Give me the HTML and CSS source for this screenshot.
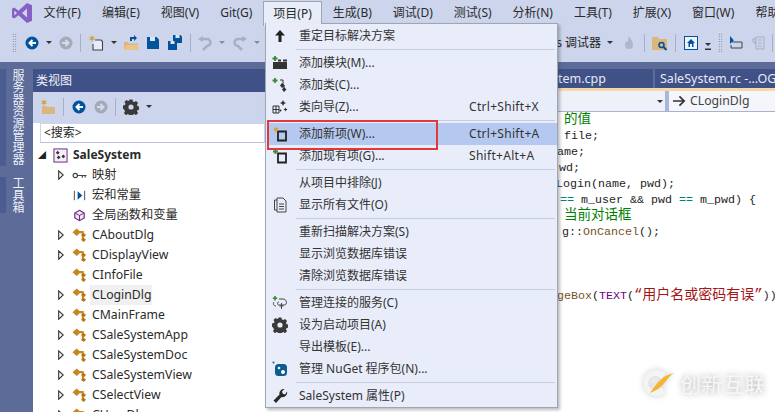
FILE: index.html
```html
<!DOCTYPE html>
<html lang="zh-CN">
<head>
<meta charset="utf-8">
<title>类视图</title>
<link rel="stylesheet" href="styles.css">
</head>
<body>
<svg class="defs" width="0" height="0">
  <symbol id="back" viewBox="0 0 14 14"><circle cx="7" cy="7" r="6.5" fill="#00539c"/><path d="M11 7H5M7.5 4 4.5 7l3 3" fill="none" stroke="#fff" stroke-width="2"/></symbol>
  <symbol id="fwd" viewBox="0 0 14 14"><circle cx="7" cy="7" r="6.5" fill="#a4aab8"/><path d="M3 7h6M6.5 4l3 3-3 3" fill="none" stroke="#d5dbeb" stroke-width="2"/></symbol>
  <symbol id="gear" viewBox="0 0 16 16"><path fill="#3a3a3a" fill-rule="evenodd" d="M6.500 0.500h3l.4 2 1.400.6 1.700-1.100 2.100 2.100-1.100 1.700.6 1.400 1.900.4v3l-1.900.4-.6 1.400 1.100 1.700-2.100 2.100-1.700-1.100-1.400.6-.4 1.900h-3l-.4-1.900-1.400-.6-1.700 1.100-2.100-2.100 1.100-1.700-.6-1.400L0 9.500v-3l1.900-.4.6-1.400L1.400 3 3.500 .9l1.700 1.100 1-.6zM8 5.400a2.600 2.600 0 1 0 0 5.200 2.600 2.600 0 0 0 0-5.200z"/></symbol>
  <symbol id="cls" viewBox="0 0 16 16"><path fill="#c8861f" d="M5 0.500 9.500 4.500 5 8.500 0.500 4.500zM8 3.300h4.500v2.200H8zM10.500 4.500h1.800V13h-1.800z"/><path fill="#b97714" d="M12.300 5l2.700 2.500-2.700 2.500-2.700-2.500zM12.300 10l2.700 2.500-2.700 2.500-2.700-2.500z"/></symbol>
  <symbol id="tri" viewBox="0 0 6 10"><path d="M.7.800 5.200 5 .7 9.200z" fill="#fff" stroke="#333" stroke-width="1.100"/></symbol>
  <symbol id="drop" viewBox="0 0 6 3"><path d="M0 0h6L3 3z" fill="#333"/></symbol>
</svg>

<header class="menubar">
  <svg class="vs-logo" viewBox="0 0 22 22"><path fill="#8661c5" fill-rule="evenodd" d="M16 1l5 2.200v15.600L16 21 7.500 13.200 3.200 16.400 1 15.300V6.700l2.200-1.100 4.300 3.200zM16 6.500 11 11l5 4.500zM3.300 8.500v5L6 11z"/></svg>
  <nav class="menu-items">
    <span class="mi">文件(F)</span><span class="mi">编辑(E)</span><span class="mi">视图(V)</span><span class="mi">Git(G)</span><span class="mi mi-open">项目(P)</span><span class="mi">生成(B)</span><span class="mi">调试(D)</span><span class="mi">测试(S)</span><span class="mi">分析(N)</span><span class="mi">工具(T)</span><span class="mi">扩展(X)</span><span class="mi">窗口(W)</span><span class="mi">帮助</span>
  </nav>
</header>

<div class="toolbar">
  <i class="grip"></i>
  <svg class="tb14 ml-back"><use href="#back"/></svg>
  <svg class="dd"><use href="#drop"/></svg>
  <svg class="tb14"><use href="#fwd"/></svg>
  <i class="tsep"></i>
  <svg class="tb16" viewBox="0 0 16 16"><path d="M7 5h6l1.500 1.500V15H5V9" fill="#e8edf9" stroke="#444" stroke-width="1.100"/><path d="M4 0l.8 2.200L7 1.500 5.500 3.500 7 5 4.800 4.800 4 7 3.200 4.800 1 5l1.500-1.500L1 1.500l2.200.7z" fill="#d9a13c"/></svg>
  <svg class="dd"><use href="#drop"/></svg>
  <svg class="tb16 gap-open" viewBox="0 0 16 16"><path d="M1 7h4l1 1.500h9V15H1z" fill="#dcb67a"/><path d="M1 15l2-5h12l-1 5z" fill="#eac58a"/><path d="M7 6V2h4V0l3 3-3 3V4H9v2z" fill="#00539c"/></svg>
  <svg class="tb14 gap-save" viewBox="0 0 14 14"><path d="M1 1h9.500L13 3.500V13H1z" fill="#00539c"/><rect x="4" y="1" width="5" height="4" fill="#dfe5f5"/></svg>
  <svg class="tb16 gap-all" viewBox="0 0 16 16"><path d="M6 0h7.500L15 1.500V8H6z" fill="#00539c"/><rect x="8.500" y="0" width="4" height="3" fill="#dfe5f5"/><path d="M1 6h9v9H1z" fill="#00539c"/><rect x="3.500" y="6" width="4" height="3" fill="#dfe5f5"/></svg>
  <i class="tsep"></i>
  <svg class="tb16 undo" viewBox="0 0 16 16"><path d="M3 4h7a3.500 3.500 0 0 1 0 7L6 15" fill="none" stroke="#a8afc0" stroke-width="2.500"/><path d="M1 4 6 1v6z" fill="#a8afc0"/></svg>
  <svg class="dd dd-gray"><use href="#drop"/></svg>
  <svg class="tb16 redo" viewBox="0 0 16 16"><path d="M13 4H6a3.500 3.500 0 0 0 0 7l4 4" fill="none" stroke="#a8afc0" stroke-width="2.500"/><path d="M15 4l-5-3v6z" fill="#a8afc0"/></svg>
  <svg class="dd dd-gray"><use href="#drop"/></svg>
  <div class="tb-right">
    <span class="debugger">s 调试器</span>
    <svg class="dd"><use href="#drop"/></svg>
    <svg class="tb16 flame" viewBox="0 0 16 16"><path d="M8 1c1 3 4 4 4 9a4 4 0 0 1-8 0c0-2 1-3 1.500-4 .5 1 1 1 1.500 1 0-2 0-4 1-6z" fill="#b0b7c8"/></svg>
    <i class="tsep"></i>
    <svg class="tb16" viewBox="0 0 16 16"><path d="M0 2h6l1 2h8v11H0z" fill="#dcb67a"/><circle cx="9.500" cy="10" r="2.500" fill="none" stroke="#00539c" stroke-width="1.500"/><path d="M11.500 12l3 3" stroke="#00539c" stroke-width="2"/></svg>
    <i class="tsep"></i>
    <svg class="tb14 home" viewBox="0 0 14 14"><rect x=".5" y=".5" width="13" height="13" fill="#f0f3fb" stroke="#00539c"/><path d="M7 3 3 7h1.500v4H6V8h2v3h1.500V7H11z" fill="#00539c"/></svg>
    <svg class="drop-ln" viewBox="0 0 6 7"><path d="M0 0h6L3 3z M0 5.500h6V7H0z" fill="#333"/></svg>
    <i class="grip grip-r"></i>
    <svg class="tb14 ptr" viewBox="0 0 14 14"><path d="M1 0v8l2-2 1.500 1V4z" fill="#00539c"/><path d="M5 6h8v6H2V9" fill="none" stroke="#444"/></svg>
    <svg class="tb14 gray-list" viewBox="0 0 14 14"><path d="M5 1h8v12H5zM1 4l3-2v6z M7 4h4M7 7h4M7 10h4" fill="none" stroke="#a8afc0"/></svg>
    <i class="tsep tsep-end"></i>
  </div>
</div>

<main class="dock">
  <aside class="rail">
    <div class="vtab vtab-a">服务器资源管理器</div>
    <div class="vtab">工具箱</div>
  </aside>

  <section class="panel">
    <h2 class="panel-title">类视图</h2>
    <div class="panel-tools">
      <svg class="tb16" viewBox="0 0 16 16"><path d="M2 7h4l1 1h8v7H2z" fill="#dcb67a"/><path d="M4 0l.8 2.200L7 1.500 5.500 3.500 7 5 4.800 4.800 4 7 3.200 4.800 1 5l1.500-1.500L1 1.500l2.200.7z" fill="#d9a13c"/></svg>
      <i class="tsep"></i>
      <svg class="tb14 ml4"><use href="#back"/></svg>
      <svg class="tb14 ml6"><use href="#fwd"/></svg>
      <i class="tsep"></i>
      <svg class="tb16"><use href="#gear"/></svg>
      <svg class="dd"><use href="#drop"/></svg>
    </div>
    <div class="search">&lt;搜索&gt;</div>
    <ul class="tree">
      <li class="row root"><span class="exp">◢</span>
        <svg class="ico" viewBox="0 0 16 16"><rect x="1" y="1" width="14" height="14" fill="#f3eef8" stroke="#68217a"/><path d="M5 3l2 2-2 2-2-2zM11 7l2 2-2 2-2-2zM6 8l2 2-2 2-2-2z" fill="#333"/></svg>
        <b>SaleSystem</b></li>
      <li class="row"><svg class="tri"><use href="#tri"/></svg>
        <svg class="ico" viewBox="0 0 16 16"><circle cx="3.500" cy="8" r="2.300" fill="none" stroke="#444" stroke-width="1.300"/><path d="M6 8h9.500M11 8v2.500M14 8v2" stroke="#444" stroke-width="1.300" fill="none"/></svg>
        <span>映射</span></li>
      <li class="row"><i class="tri-gap"></i>
        <svg class="ico" viewBox="0 0 16 16"><path d="M2.500 3v10" stroke="#444"/><path d="M6 3.500v9l5-4.500z" fill="#00539c"/><path d="M13.500 3v10" stroke="#444"/></svg>
        <span>宏和常量</span></li>
      <li class="row"><i class="tri-gap"></i>
        <svg class="ico" viewBox="0 0 16 16"><path d="M8 2.500l5 2.800v5.400l-5 2.800-5-2.800V5.300z" fill="#efe6f5" stroke="#68217a" stroke-width="1.200"/><path d="M3.500 5.500 8 8l4.500-2.500M8 8v5" fill="none" stroke="#68217a"/></svg>
        <span>全局函数和变量</span></li>
      <li class="row"><svg class="tri"><use href="#tri"/></svg><svg class="ico"><use href="#cls"/></svg><span>CAboutDlg</span></li>
      <li class="row"><svg class="tri"><use href="#tri"/></svg><svg class="ico"><use href="#cls"/></svg><span>CDisplayView</span></li>
      <li class="row"><i class="tri-gap"></i><svg class="ico"><use href="#cls"/></svg><span>CInfoFile</span></li>
      <li class="row"><svg class="tri"><use href="#tri"/></svg><svg class="ico"><use href="#cls"/></svg><span class="sel">CLoginDlg</span></li>
      <li class="row"><svg class="tri"><use href="#tri"/></svg><svg class="ico"><use href="#cls"/></svg><span>CMainFrame</span></li>
      <li class="row"><svg class="tri"><use href="#tri"/></svg><svg class="ico"><use href="#cls"/></svg><span>CSaleSystemApp</span></li>
      <li class="row"><svg class="tri"><use href="#tri"/></svg><svg class="ico"><use href="#cls"/></svg><span>CSaleSystemDoc</span></li>
      <li class="row"><svg class="tri"><use href="#tri"/></svg><svg class="ico"><use href="#cls"/></svg><span>CSaleSystemView</span></li>
      <li class="row"><svg class="tri"><use href="#tri"/></svg><svg class="ico"><use href="#cls"/></svg><span>CSelectView</span></li>
      <li class="row"><svg class="tri"><use href="#tri"/></svg><svg class="ico"><use href="#cls"/></svg><span>CUserDlg</span></li>
    </ul>
  </section>

  <section class="doc">
    <div class="tabs">
      <div class="tab tab-a">SaleSystem.cpp</div>
      <div class="tab tab-b">SaleSystem.rc -...OGINDLG</div>
    </div>
    <div class="navbar">
      <div class="combo"><svg class="dd"><use href="#drop"/></svg></div>
      <div class="nav-sym"><svg class="nav-arrow" viewBox="0 0 16 14"><path d="M1 7h13M8.500 1.500 14 7l-5.500 5.500" fill="none" stroke="#333" stroke-width="2"/></svg><span>CLoginDlg</span></div>
    </div>
    <div class="code">
      <div class="ln at564 cn g">的值</div>
      <div class="ln at564">file;</div>
      <div class="ln at557">ame;</div>
      <div class="ln at559">wd;</div>
      <div class="ln at556">Login(name, pwd);</div>
      <div class="ln at560"><span class="t">==</span> m_user &amp;&amp; pwd <span class="t">==</span> m_pwd) {</div>
      <div class="ln at564 cn g">当前对话框</div>
      <div class="ln at562">g::<span class="f">OnCancel</span>();</div>
      <div class="ln"></div>
      <div class="ln"></div>
      <div class="ln"></div>
      <div class="ln at557"><span class="f">geBox</span>(<span class="m">TEXT</span>(<span class="s">“用户名或密码有误”</span>))</div>
    </div>
  </section>
</main>

<div class="dropdown">
  <div class="it"><svg class="mic" viewBox="0 0 16 16"><path d="M8 2 3 7.500h3.500V14h3V7.500H13z" fill="#222"/></svg><span class="lb">重定目标解决方案</span></div>
  <hr class="sep">
  <div class="it"><svg class="mic" viewBox="0 0 16 16"><path d="M1 7h14v7H1z M6 4.500h3v2H6zM11 4.500h4v2h-4z" fill="#333"/><path d="M3 1v5M.5 3.500h5" stroke="#388a34" stroke-width="1.800"/></svg><span class="lb">添加模块(M)...</span></div>
  <div class="it"><svg class="mic" viewBox="0 0 16 16"><path d="M3 1v5M.5 3.500h5" stroke="#388a34" stroke-width="1.800"/><path d="M8 3h3v7h2" stroke="#333" fill="none"/><path d="M10 6l3 2.500-3 2.500-2-2.500zM12 10l2.500 2.500L12 15l-2-2.500z" fill="#333"/></svg><span class="lb">添加类(C)...</span></div>
  <div class="it"><svg class="mic" viewBox="0 0 16 16"><path d="M1 7h6v7H1zM1 10.500h6M4 7v7" fill="none" stroke="#333"/><path d="M11 1l1 2 2 1-2 1-1 2-1-2-2-1 2-1zM13.500 8.500l.7 1.300 1.300.7-1.300.7-.7 1.300-.7-1.300-1.300-.7 1.300-.7zM8.500 10l.5 1 1 .5-1 .5-.5 1-.5-1-1-.5 1-.5z" fill="#333"/></svg><span class="lb">类向导(Z)...</span><span class="sc">Ctrl+Shift+X</span></div>
  <hr class="sep">
  <div class="it it-hi"><svg class="mic" viewBox="0 0 16 16"><path d="M6 5.500h8v9H6z" fill="none" stroke="#222" stroke-width="1.800"/><path d="M4 0l.8 2.200L7 1.500 5.500 3.500 7 5 4.800 4.800 4 7 3.200 4.800 1 5l1.500-1.500L1 1.500l2.200.7z" fill="#d9a13c"/></svg><span class="lb">添加新项(W)...</span><span class="sc">Ctrl+Shift+A</span></div>
  <div class="it"><svg class="mic" viewBox="0 0 16 16"><path d="M6 5.500h8v9H6z" fill="none" stroke="#222" stroke-width="1.800"/><path d="M3.500 1v5M1 3.500h5" stroke="#388a34" stroke-width="1.800"/></svg><span class="lb">添加现有项(G)...</span><span class="sc">Shift+Alt+A</span></div>
  <hr class="sep">
  <div class="it"><i class="mic"></i><span class="lb">从项目中排除(J)</span></div>
  <div class="it"><svg class="mic" viewBox="0 0 16 16"><path d="M5 3H2.500v10H5" fill="none" stroke="#444"/><path d="M5 1h6l3 3v11H5z" fill="none" stroke="#444"/><path d="M7 7h5M7 9.500h5M7 12h5" stroke="#444"/></svg><span class="lb">显示所有文件(O)</span></div>
  <hr class="sep">
  <div class="it"><i class="mic"></i><span class="lb">重新扫描解决方案(S)</span></div>
  <div class="it"><i class="mic"></i><span class="lb">显示浏览数据库错误</span></div>
  <div class="it"><i class="mic"></i><span class="lb">清除浏览数据库错误</span></div>
  <hr class="sep">
  <div class="it"><svg class="mic" viewBox="0 0 16 16"><path d="M3 1v4.500M.8 3.200h4.400" stroke="#388a34" stroke-width="1.600"/><path d="M2 7c-1.500 2 0 4 2 4M7 4h4c3 0 4 3 3 5-.5 1-1.500 1-2 1H7c-2 0-2-3 0-3M9.500 8v6M7.500 11h4" fill="none" stroke="#444"/></svg><span class="lb">管理连接的服务(C)</span></div>
  <div class="it"><svg class="mic"><use href="#gear"/></svg><span class="lb">设为启动项目(A)</span></div>
  <div class="it"><i class="mic"></i><span class="lb">导出模板(E)...</span></div>
  <div class="it"><svg class="mic" viewBox="0 0 16 16"><circle cx="1.500" cy="1.500" r="1" fill="#0e5a93"/><rect x="3" y="3" width="12" height="12" rx="3.500" fill="#0e5a93"/><circle cx="7" cy="7" r="1.300" fill="#fff"/><circle cx="11" cy="11" r="2" fill="#fff"/></svg><span class="lb">管理 NuGet 程序包(N)...</span></div>
  <hr class="sep">
  <div class="it"><svg class="mic" viewBox="0 0 16 16"><path d="M15 3.500A4.500 4.500 0 0 1 9.500 9L4 15 1.500 12.500 7.500 6.500A4.500 4.500 0 0 1 12.500 1L10 3.500 10.800 5.800 13 6.500z" fill="#2a2a2a"/></svg><span class="lb">SaleSystem 属性(P)</span></div>
</div>
<div class="redbox"></div>

<div class="mark">
  <svg class="mark-logo" viewBox="0 0 34 30"><path d="M26 6A13 13 0 1 0 26 24L21 19A7 7 0 1 1 21 11z" fill="#f4f4f4"/><path d="M9 10l8 6 8-3-9 9-7-2 6-4z" fill="#e9e9e9"/><path d="M34 5C24 7 18 13 10 25c8-3 13-8 16-12 3-4 5-6 8-8z" fill="#f2b632"/></svg>
  <div class="mark-text">创新互联</div>
</div>
</body>
</html>
```
FILE: styles.css
```css
* { box-sizing: border-box; }
html, body { margin: 0; padding: 0; }
body {
  width: 775px; height: 412px; overflow: hidden; position: relative;
  background: #ccd5eb; color: #1e1e1e;
  font: 12px/16px "Noto Sans", "Noto Sans CJK SC", sans-serif;
}
.defs { position: absolute; }
i { display: block; flex: none; }
svg { display: block; flex: none; }

.menubar { display: flex; align-items: center; height: 26px; background: #ccd5eb; overflow: hidden; }
.vs-logo { width: 22px; height: 22px; margin-left: 11px; }
.menu-items { display: flex; white-space: nowrap; }
.mi { display: block; padding: 0 10.500px; line-height: 26px; height: 26px; color: #2b2b2b; flex: none; }
.mi-open { background: #e8edf9; border: 1px solid #9ba7b7; border-bottom: 0; height: 25px; line-height: 24px; padding: 0 9.500px; margin-top: 1px; }

.toolbar { display: flex; align-items: center; height: 36px; padding: 0 0 3px 12px; background: #ccd5eb; }
.grip { width: 5px; height: 19px; background-image: radial-gradient(#5c6270 .7px, transparent .8px); background-size: 2.500px 2.500px; }
.tb14 { width: 14px; height: 14px; }
.tb16 { width: 16px; height: 16px; }
.ml-back { margin-left: 8px; }
.dd { width: 6px; height: 3px; margin: 0 7px 0 7px; }
.dd-gray { opacity: .45; margin: 0 6px 0 6px; }
.tsep { width: 1px; height: 18px; background: #a5afc8; margin: 0 7px 0 7px; }
.tsep-end { margin-right: 2px; }
.gap-open { margin-left: -1px; }
.gap-save { margin-left: 7px; }
.gap-all { margin-left: 7px; }
.undo { margin-left: -1px; }
.redo { margin-left: 1px; }
.tb-right { display: flex; align-items: center; margin-left: auto; }
.debugger { margin-right: -1px; white-space: pre; font-size: 12px; }
.flame { margin-left: 1px; }
.home { margin-left: 1px; }
.drop-ln { width: 6px; height: 7px; margin: 8px 0 0 7px; }
.grip-r { margin-left: 7px; }
.ptr { margin-left: 6px; }
.gray-list { margin-left: 8px; }

.dock { display: flex; height: 350px; background: #5d6b99; padding-top: 7px; }
.rail { width: 33px; flex: none; }
.vtab { writing-mode: vertical-rl; white-space: nowrap; width: 33px; height: 97px; margin-bottom: 11px; border-left: 6px solid #4b5c90; padding-right: 9px; color: #eef1f8; line-height: 14px; }
.vtab:not(.vtab-a) { height: 36px; }

.panel { width: 232px; flex: none; background: #fff; display: flex; flex-direction: column; overflow: hidden; }
.panel-title { margin: 0; height: 23px; flex: none; background: #3f5187; color: #f0f2f8; font: inherit; line-height: 23px; padding-left: 3px; }
.panel-tools { display: flex; align-items: center; height: 31px; flex: none; padding: 0 0 2px 7px; background: #ccd5eb; }
.ml4 { margin-left: 1px; }
.ml6 { margin-left: 8px; }
.search { height: 20px; flex: none; margin-left: 7px; background: #fff; border: 1px solid #ccd5eb; border-bottom-color: #b8c2da; padding-left: 3px; line-height: 18px; }
.tree { list-style: none; margin: 0; padding: 2px 0 0 0; }
.row { display: flex; align-items: center; height: 20px; padding-left: 24px; white-space: nowrap; font-size: 12.250px; color: #2a2a2a; flex: none; }
.root { padding-left: 4px; }
.root b { font-weight: 700; margin-left: 5px; font-size: 12px; }
.exp { width: 16px; font-size: 8px; color: #222; padding-left: 1px; flex: none; }
.tri { width: 6px; height: 10px; margin-left: 1px; margin-right: 8px; }
.tri-gap { width: 15px; }
.ico { width: 15px; height: 15px; }
.row > svg.ico + span { margin-left: 5px; }
.row > svg.ico + .sel { background: #f0f0f0; padding: 2px 1px 2px 2px; margin-left: 3px; }

.doc { flex: 1; min-width: 0; background: #fff; display: flex; flex-direction: column; overflow: hidden; }
.tabs { display: flex; height: 19px; background: #5d6b99; white-space: nowrap; flex: none; overflow: hidden; }
.tab { background: #3f5187; color: #e6eaf5; line-height: 19px; flex: none; font-size: 12.500px; }
.tab-a { width: 388px; margin-right: 2px; text-align: right; padding-right: 47px; }
.tab-b { flex: 1; padding-left: 5px; overflow: hidden; }
.navbar { display: flex; height: 24px; background: #ccd5eb; border-top: 3px solid #f4d9a8; flex: none; white-space: nowrap; border-bottom: 1px solid #a8b3cc; }
.combo { width: 404px; flex: none; background: #eef1fa; display: flex; align-items: center; justify-content: flex-end; border-right: 4px solid #a8b8d8; }
.combo .dd { margin: 0 2px 0 0; }
.nav-sym { display: flex; align-items: center; gap: 4px; padding-left: 3px; background: #f4f6fc; flex: 1; font-size: 12.250px; color: #444; }
.nav-arrow { width: 14px; height: 12px; }
.code { flex: 1; font: 11.670px/16px "Liberation Mono", "Noto Sans CJK SC", monospace; color: #1e1e1e; overflow: hidden; }
.ln { height: 16px; white-space: pre; }
.at556 { padding-left: 291px; }
.at557 { padding-left: 292px; }
.at559 { padding-left: 294px; }
.at560 { padding-left: 295px; }
.at562 { padding-left: 297px; }
.at564 { padding-left: 299px; }
.cn { font-size: 13.500px; }
.g { color: #008000; }
.t { color: #008080; }
.f { color: #74531f; }
.m { color: #6f008a; }
.s { color: #a31515; font-size: 14px; line-height: 14px; }

.dropdown {
  position: absolute; left: 265px; top: 23px; width: 293px; height: 385px; padding: 1px 0 0 2px;
  background: #e8edf9; border: 1px solid #9ba7b7;
  box-shadow: 2px 2px 3px rgba(60, 60, 70, .35); z-index: 2;
}
.dropdown::before { content: ""; position: absolute; left: 0; top: -1px; width: 55px; height: 1px; background: #e8edf9; }
.it { position: relative; display: flex; align-items: center; height: 22.200px; white-space: nowrap; color: #333; }
.it-hi { background: #b5c8f0; }
.mic { width: 16px; height: 16px; flex: none; margin-left: 4px; }
.lb { margin-left: 11px; }
.sc { position: absolute; left: 201px; letter-spacing: .3px; }
.sep { height: 4.500px; margin: 0 0 0 28px; border: 0; position: relative; overflow: visible; }
.sep::after { content: ""; position: absolute; left: 0; right: 2px; top: 2px; height: 1px; background: #c4cee0; }

.redbox { position: absolute; left: 267px; top: 120px; width: 171px; height: 30px; border: 2.500px solid #e0393b; z-index: 4; }

.mark { position: absolute; left: 640px; top: 368px; display: flex; align-items: center; gap: 6px; z-index: 5; }
.mark-logo { width: 34px; height: 30px; filter: drop-shadow(0 0 3px rgba(0,0,0,.2)); }
.mark-text { font-size: 21px; line-height: 28px; color: #f7f7f7; text-shadow: 0 0 6px rgba(0,0,0,.35); letter-spacing: .5px; font-family: "Noto Sans CJK SC", sans-serif; font-weight: 400; }
```
